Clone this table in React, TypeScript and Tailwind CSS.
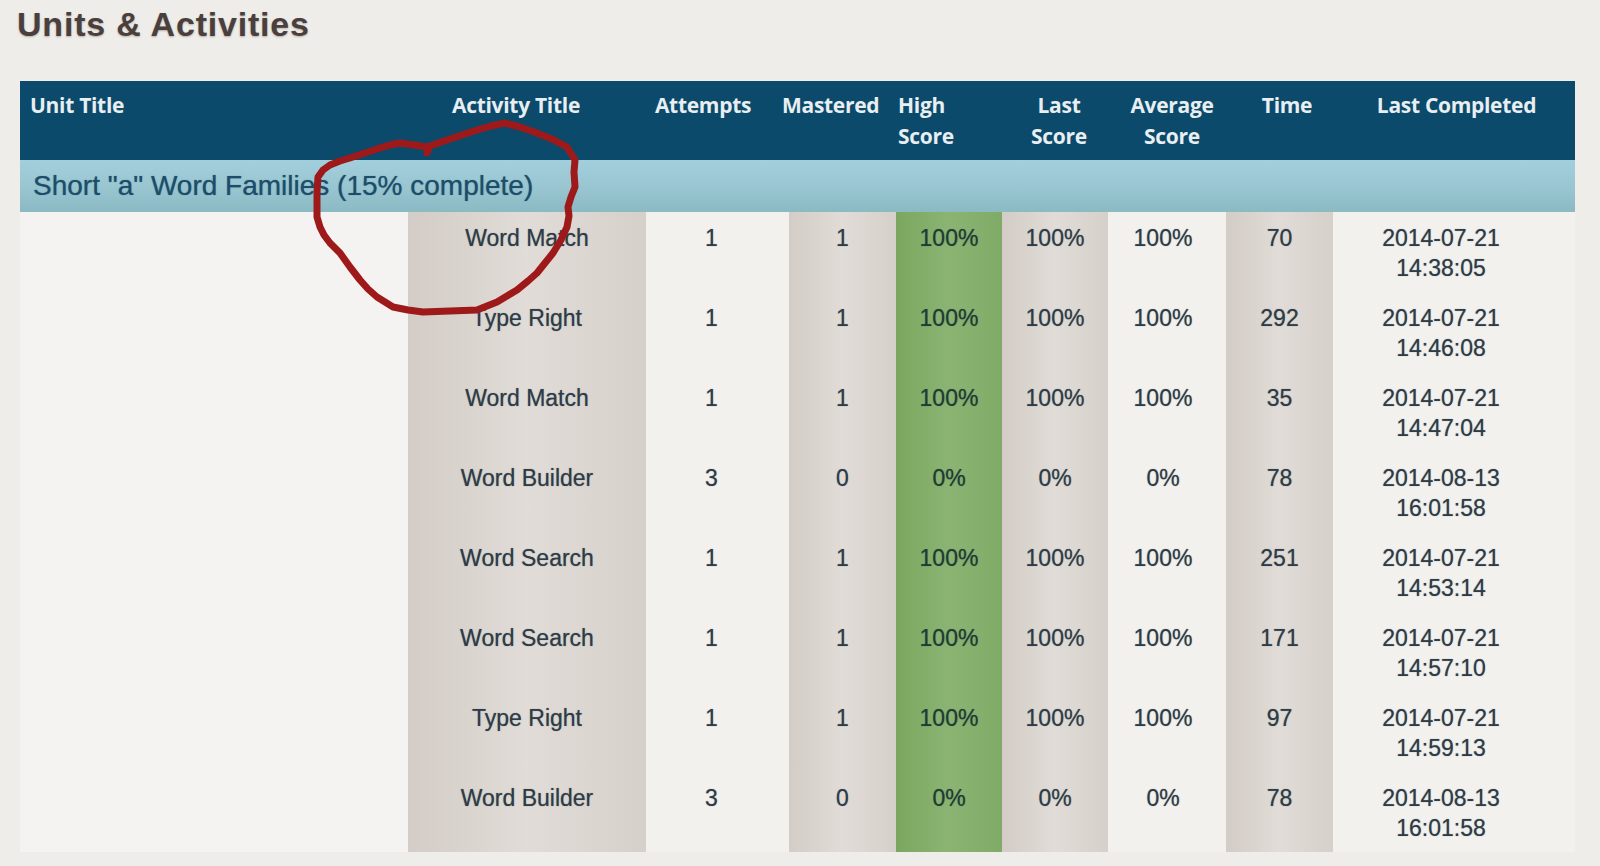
import React from 'react'

type Row = {
  activity: string
  attempts: string
  mastered: string
  high: string
  last: string
  avg: string
  time: string
  date: string
  clock: string
}

const rows: Row[] = [
  { activity: 'Word Match', attempts: '1', mastered: '1', high: '100%', last: '100%', avg: '100%', time: '70', date: '2014-07-21', clock: '14:38:05' },
  { activity: 'Type Right', attempts: '1', mastered: '1', high: '100%', last: '100%', avg: '100%', time: '292', date: '2014-07-21', clock: '14:46:08' },
  { activity: 'Word Match', attempts: '1', mastered: '1', high: '100%', last: '100%', avg: '100%', time: '35', date: '2014-07-21', clock: '14:47:04' },
  { activity: 'Word Builder', attempts: '3', mastered: '0', high: '0%', last: '0%', avg: '0%', time: '78', date: '2014-08-13', clock: '16:01:58' },
  { activity: 'Word Search', attempts: '1', mastered: '1', high: '100%', last: '100%', avg: '100%', time: '251', date: '2014-07-21', clock: '14:53:14' },
  { activity: 'Word Search', attempts: '1', mastered: '1', high: '100%', last: '100%', avg: '100%', time: '171', date: '2014-07-21', clock: '14:57:10' },
  { activity: 'Type Right', attempts: '1', mastered: '1', high: '100%', last: '100%', avg: '100%', time: '97', date: '2014-07-21', clock: '14:59:13' },
  { activity: 'Word Builder', attempts: '3', mastered: '0', high: '0%', last: '0%', avg: '0%', time: '78', date: '2014-08-13', clock: '16:01:58' },
]

const shaded = 'bg-gradient-to-r from-[#d3ccc7] via-[#e1dcd7] to-[#d6d0cb]'
const light = 'bg-[#f3f1ee]'
const green = 'bg-gradient-to-r from-[#7aa760] via-[#8bb472] to-[#80ab67]'
const cell = 'h-[80px] pt-[11px] text-center leading-[30px]'

// hand-drawn annotation loop, page coordinates
const circle =
  '505,123 520,127 537,133 552,139 567,147 575,160 574,172 575,187 571,197 568,207 569,216 567,227 561,240 553,253 545,263 537,273 528,281 517,290 507,296 497,302 487,306 477,310 450,311 423,312 408,310 393,307 385,302 377,297 368,289 360,280 350,267 340,253 335,248 330,243 324,235 320,227 317,217 317,207 317,192 318,177 323,170 330,165 340,161 350,158 365,153 380,148 390,145 400,143 414,145 427,147 427,153 430,146 447,140 462,135 477,130 491,126 505,123'

export default function App() {
  return (
    <div className="relative w-[1600px] h-[866px] overflow-hidden bg-[#efede9] font-['Liberation_Sans',Arial,sans-serif]">
      <h2 className="ml-[17px] mt-[7px] mb-[40px] text-[34px] leading-[34px] tracking-[0.8px] font-bold text-[#4a3f3d] [text-shadow:0_1px_2px_rgba(80,60,50,0.35)]">
        Units &amp; Activities
      </h2>

      <div className="ml-[20px] w-[1555px]">
        {/* Header */}
        <div className="grid grid-cols-[388px_216px_158px_90px_138px_98px_128px_102px_237px] h-[79px] bg-[#0b4a6b] pt-[9px] text-[21px] leading-[31px] font-bold text-[#e8eef1] font-['Open_Sans',sans-serif] tracking-[-0.3px]">
          <div className="pl-[10px]">Unit Title</div>
          <div className="text-center">Activity Title</div>
          <div className="text-center">Attempts</div>
          <div className="text-center">Mastered</div>
          <div className="pl-[26px]">High<br />Score</div>
          <div className="text-center">Last<br />Score</div>
          <div className="text-center">Average<br />Score</div>
          <div className="text-center">Time</div>
          <div className="text-center">Last Completed</div>
        </div>

        {/* Unit row */}
        <div className="flex h-[52px] items-center bg-gradient-to-b from-[#a2cfdc] via-[#9ac6d2] to-[#8bbac3] pl-[13px] text-[28px] text-[#1d4e69] [text-shadow:0_0_1px_rgba(29,78,105,0.7)]">
          Short "a" Word Families (15% complete)
        </div>

        {/* Activities */}
        <div className="grid grid-cols-[388px_238px_143px_107px_106px_106px_118px_107px_242px] text-[23px] text-[#2e3c47] [text-shadow:0_0_1px_rgba(46,60,71,0.6)]">
          {rows.map((r, i) => (
            <React.Fragment key={i}>
              <div className="h-[80px] bg-[#f4f3f1]" />
              <div className={`${cell} ${shaded}`}>{r.activity}</div>
              <div className={`${cell} ${light} pr-[12px]`}>{r.attempts}</div>
              <div className={`${cell} ${shaded}`}>{r.mastered}</div>
              <div className={`${cell} ${green} text-[#203b33]`}>{r.high}</div>
              <div className={`${cell} ${shaded}`}>{r.last}</div>
              <div className={`${cell} ${light} pr-[8px]`}>{r.avg}</div>
              <div className={`${cell} ${shaded}`}>{r.time}</div>
              <div className={`${cell} ${light} pr-[26px]`}>
                {r.date}
                <br />
                {r.clock}
              </div>
            </React.Fragment>
          ))}
        </div>
      </div>

      {/* red marker annotation */}
      <svg className="pointer-events-none absolute left-0 top-0" width="1600" height="866">
        <polyline
          points={circle}
          fill="none"
          stroke="#9e1a1a"
          strokeWidth="7"
          strokeLinejoin="round"
          strokeLinecap="round"
        />
      </svg>
    </div>
  )
}
